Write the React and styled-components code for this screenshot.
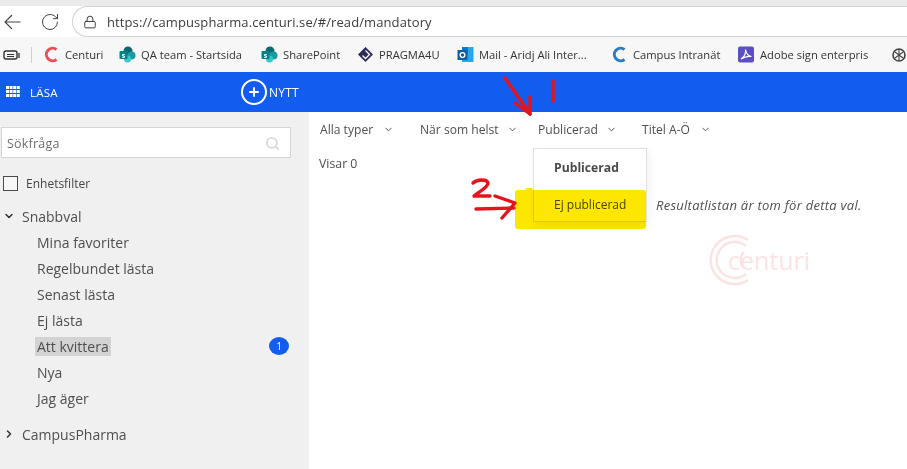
import React from 'react';
import styled, { createGlobalStyle } from 'styled-components';
import { RotateCw, Lock, Search, ChevronDown, ChevronRight, Plus } from 'lucide-react';

const GlobalStyle = createGlobalStyle`
  html, body { margin: 0; padding: 0; background: #fff; overflow: hidden; }
  * { box-sizing: border-box; }
  body { font-family: "Open Sans", "Noto Sans", sans-serif; color: #4a4a4a; }
`;

const Page = styled.div`
  position: relative;
  width: 907px;
  height: 469px;
  overflow: hidden;
  display: flex;
  flex-direction: column;
`;

const AddressBar = styled.div`
  height: 37px;
  background: #fff;
  border-top: 6px solid #ebebeb;
  display: flex;
  align-items: flex-start;
  padding-left: 4px;
`;

const NavIcon = styled.span`
  display: flex;
  align-items: center;
  justify-content: center;
  height: 31px;
  width: ${p => p.$w}px;
  color: #444;
  margin-right: ${p => p.$gap}px;
`;

const UrlPill = styled.div`
  flex: 1;
  height: 31px;
  margin-right: -30px;
  border: 1px solid #d2d2d2;
  border-right: none;
  border-radius: 16px 0 0 16px;
  display: flex;
  align-items: center;
  padding-left: 10px;
  gap: 10px;
  color: #333;
`;

const UrlText = styled.span`
  font-size: 13px;
  color: #3c3c3c;
  letter-spacing: 0.1px;
`;

const Bookmarks = styled.div`
  height: 35px;
  background: #f7f7f7;
  display: flex;
  align-items: center;
  padding-left: 3px;
  font-size: 11.2px;
  color: #333;
  white-space: nowrap;
`;

const Divider = styled.span`
  width: 1px;
  height: 16px;
  background: #cfcfcf;
  margin: 0 11px 0 11px;
`;

const Bookmark = styled.span`
  display: flex;
  align-items: center;
  gap: 5px;
  width: ${p => p.$w}px;
  flex: none;
`;

const BlueBar = styled.div`
  height: 40px;
  background: #135cf0;
  color: #fff;
  display: flex;
  align-items: center;
  font-size: 11.5px;
  letter-spacing: 0.2px;
`;

const BarSection = styled.div`
  display: flex;
  align-items: center;
  width: 241px;
  padding-left: 6px;
  gap: 10px;
`;

const NewButton = styled.div`
  display: flex;
  align-items: center;
  gap: 2px;
  font-size: 12px;
`;

const PlusRing = styled.span`
  width: 26px;
  height: 26px;
  border: 2px solid #fff;
  border-radius: 50%;
  display: flex;
  align-items: center;
  justify-content: center;
`;

const Body = styled.div`
  flex: 1;
  display: flex;
`;

const Sidebar = styled.aside`
  width: 309px;
  background: #f0f0f0;
  padding: 15px 0 0 1px;
`;

const SearchBox = styled.div`
  width: 290px;
  height: 31px;
  margin-bottom: 16px;
  border: 1px solid #d5d5d5;
  background: #fff;
  display: flex;
  align-items: center;
  justify-content: space-between;
  padding: 1px 10px 0 5px;
  font-size: 12.5px;
  color: #6e6e6e;
  letter-spacing: 0.2px;
`;

const FilterRow = styled.label`
  display: flex;
  align-items: center;
  gap: 8px;
  padding-left: 2px;
  font-size: 12px;
  color: #444;
  margin-bottom: 11px;
  height: 18px;
`;

const Check = styled.span`
  width: 15px;
  height: 15px;
  border: 1px solid #4a4a4a;
  background: #f6f6f6;
`;

const GroupHead = styled.div`
  display: flex;
  align-items: center;
  gap: 7px;
  padding-left: 2px;
  height: 26px;
  font-size: 14px;
  color: #4f4f4f;
  margin-top: ${p => p.$top || 0}px;
`;

const ItemRow = styled.div`
  height: 26px;
  display: flex;
  align-items: center;
  justify-content: space-between;
  padding-left: 34px;
  padding-right: 20px;
  font-size: 14px;
  color: #4f4f4f;
`;

const ItemLabel = styled.span`
  padding: 0 2px;
  line-height: 19px;
  background: ${p => (p.$active ? '#d3d3d3' : 'transparent')};
`;

const CountBadge = styled.span`
  width: 20px;
  height: 18px;
  border-radius: 50%;
  background: #135cf0;
  color: #fff;
  font-size: 10px;
  display: flex;
  align-items: center;
  justify-content: center;
`;

const Main = styled.main`
  position: relative;
  flex: 1;
  background: #fff;
  padding: 7px 0 0 10px;
`;

const FilterBar = styled.div`
  display: flex;
  align-items: center;
  height: 20px;
  font-size: 12.1px;
  color: #4f4f4f;
`;

const FilterButton = styled.span`
  display: flex;
  align-items: center;
  gap: ${p => p.$gap}px;
  width: ${p => p.$w}px;
  flex: none;
  padding-left: 1px;
  color: #4f4f4f;
`;

const Showing = styled.div`
  margin-top: 16px;
  font-size: 12.3px;
  color: #4f4f4f;
`;

const Menu = styled.div`
  position: absolute;
  left: 224px;
  top: 36px;
  width: 114px;
  height: 74px;
  background: #fff;
  border: 1px solid #e0e0e0;
  box-shadow: 2px 3px 8px rgba(0, 0, 0, 0.06);
  display: flex;
  flex-direction: column;
`;

const MenuItem = styled.div`
  height: ${p => (p.$bold ? 37 : 36)}px;
  padding-top: ${p => (p.$bold ? 0 : 2)}px;
  display: flex;
  align-items: center;
  padding-left: 20px;
  font-size: ${p => (p.$bold ? 12.2 : 12)}px;
  font-weight: ${p => (p.$bold ? 700 : 400)};
  color: #4a4a4a;
`;

// marker stroke painted on top of the menu, text shows through
const Highlight = styled.div`
  position: absolute;
  left: 206px;
  top: 78px;
  width: 131px;
  height: 39px;
  background: #fde600;
  border-radius: 3px;
  mix-blend-mode: multiply;

  &::before {
    content: '';
    position: absolute;
    left: 10px;
    top: -2px;
    width: 8px;
    height: 3px;
    background: #fde600;
    border-radius: 2px 2px 0 0;
  }
`;

const EmptyText = styled.div`
  position: absolute;
  left: 347px;
  top: 84px;
  font-size: 13px;
  letter-spacing: 0.26px;
  font-style: italic;
  color: #4f4f4f;
`;

const Watermark = styled.div`
  position: absolute;
  left: 399px;
  top: 122px;
  display: flex;
  align-items: center;
  color: #fbe3e3;
  font-size: 25px;
  font-weight: 500;
`;

const WatermarkText = styled.span`
  margin-left: -26px;
`;

const Annotations = styled.svg`
  position: absolute;
  left: 0;
  top: 0;
  pointer-events: none;
`;

const BackArrow = () => (
  <svg width="17" height="16" viewBox="0 0 17 16">
    <path d="M16.5 8 H1 M8 1 L1 8 L8 15" fill="none" stroke="#444" strokeWidth="1.1" />
  </svg>
);

const AppGrid = () => (
  <svg width="14" height="12" viewBox="0 0 14 12" fill="#fff">
    {[0, 4, 8].map(y =>
      [0, 3.6, 7.2, 10.8].map(x => <rect key={`${x}-${y}`} x={x} y={y} width="3" height="3" />)
    )}
  </svg>
);

const SharePointIcon = () => (
  <svg width="17" height="17" viewBox="0 0 17 17">
    <circle cx="9" cy="5" r="4.5" fill="#0b6a70" />
    <circle cx="12.5" cy="9.5" r="4" fill="#1a9ba1" />
    <circle cx="8.5" cy="13" r="3.5" fill="#37c6d0" />
    <rect x="0.5" y="5" width="8" height="8" rx="1" fill="#038387" />
    <text x="4.5" y="11.5" fontSize="7" fontWeight="700" textAnchor="middle" fill="#fff">s</text>
  </svg>
);

const CLogo = ({ color }) => (
  <svg width="17" height="17" viewBox="0 0 17 17">
    <path d="M13.5 3.5 A6.3 6.3 0 1 0 13.5 13.5" fill="none" stroke={color} strokeWidth="3" />
  </svg>
);

const PragmaIcon = () => (
  <svg width="17" height="17" viewBox="0 0 17 17">
    <path d="M8.5 1 L16 8.5 L8.5 16 L1 8.5 Z" fill="#2b2b5c" />
    <path d="M8.5 4.5 L12.5 8.5 L8.5 12.5 L5.5 9.5" fill="none" stroke="#fff" strokeWidth="1.3" />
  </svg>
);

const OutlookIcon = () => (
  <svg width="17" height="17" viewBox="0 0 17 17">
    <rect x="5" y="1" width="11.5" height="15" fill="#28a8ea" />
    <rect x="5" y="1" width="6" height="7" fill="#0078d4" />
    <rect x="0.5" y="4" width="10" height="10" fill="#0f5ea8" />
    <circle cx="5.5" cy="9" r="2.4" fill="none" stroke="#fff" strokeWidth="1.3" />
  </svg>
);

const AdobeIcon = () => (
  <svg width="17" height="17" viewBox="0 0 17 17">
    <rect width="16" height="16" y="0.5" rx="2" fill="#5a4fc4" />
    <path d="M3 13 C6 11 8 7 7.5 3.5 C8 7 10 10 13.5 10.5 C10 10 6 11 3 13 Z" fill="none" stroke="#fff" strokeWidth="1.2" />
  </svg>
);

const ChatIcon = () => (
  <svg width="16" height="16" viewBox="0 0 16 16">
    <circle cx="8" cy="8" r="6" fill="none" stroke="#444" strokeWidth="1.6" />
    <path d="M4 5 L12 11 M12 5 L4 11 M8 2 V14" stroke="#444" strokeWidth="1.1" />
  </svg>
);

const TabsIcon = () => (
  <svg width="17" height="12" viewBox="0 0 17 12">
    <rect x="1" y="2" width="13" height="8" rx="2" fill="none" stroke="#333" strokeWidth="1.4" />
    <path d="M4 5.5 H11 M4 7.5 H11" stroke="#333" strokeWidth="1" />
    <path d="M16 4 V9" stroke="#333" strokeWidth="1.3" />
  </svg>
);

const CenturiMark = () => (
  <svg width="46" height="52" viewBox="0 0 46 52">
    <g fill="none" stroke="#fbe3e3" strokeWidth="2.5">
      <path d="M40 6 A24 24 0 1 0 40 46" />
      <path d="M38 12 A18 18 0 1 0 38 40" />
      <path d="M36 18 A11 11 0 0 0 36 34" />
    </g>
  </svg>
);

const bookmarks = [
  { label: 'Centuri', w: 76, icon: <CLogo color="#e8505b" /> },
  { label: 'QA team - Startsida', w: 142, icon: <SharePointIcon /> },
  { label: 'SharePoint', w: 96, icon: <SharePointIcon /> },
  { label: 'PRAGMA4U', w: 100, icon: <PragmaIcon /> },
  { label: 'Mail - Aridj Ali Inter...', w: 154, icon: <OutlookIcon /> },
  { label: 'Campus Intranät', w: 127, icon: <CLogo color="#2b7cc0" /> },
  { label: 'Adobe sign enterpris', w: 153, icon: <AdobeIcon /> },
];

const quickLinks = ['Mina favoriter', 'Regelbundet lästa', 'Senast lästa', 'Ej lästa', 'Att kvittera', 'Nya', 'Jag äger'];

const filters = [
  { label: 'Alla typer', w: 100, gap: 10 },
  { label: 'När som helst', w: 118, gap: 8 },
  { label: 'Publicerad', w: 104, gap: 8 },
  { label: 'Titel A-Ö', w: 90, gap: 10 },
];

export default function App() {
  return (
    <Page>
      <GlobalStyle />
      <AddressBar>
        <NavIcon $w={17} $gap={18}><BackArrow /></NavIcon>
        <NavIcon $w={21} $gap={12}><RotateCw size={20} strokeWidth={1.2} /></NavIcon>
        <UrlPill>
          <Lock size={14} strokeWidth={1.6} />
          <UrlText>https://campuspharma.centuri.se/#/read/mandatory</UrlText>
        </UrlPill>
      </AddressBar>
      <Bookmarks>
        <TabsIcon />
        <Divider />
        {bookmarks.map(b => (
          <Bookmark key={b.label} $w={b.w}>{b.icon}{b.label}</Bookmark>
        ))}
        <ChatIcon />
      </Bookmarks>
      <BlueBar>
        <BarSection>
          <AppGrid />
          LÄSA
        </BarSection>
        <NewButton>
          <PlusRing><Plus size={14} strokeWidth={3.2} /></PlusRing>
          NYTT
        </NewButton>
      </BlueBar>
      <Body>
        <Sidebar>
          <SearchBox>
            Sökfråga
            <Search size={15} strokeWidth={3} color="#d8d8d8" />
          </SearchBox>
          <FilterRow><Check />Enhetsfilter</FilterRow>
          <GroupHead><ChevronDown size={12} strokeWidth={3} color="#333" />Snabbval</GroupHead>
          {quickLinks.map(item => (
            <ItemRow key={item}>
              <ItemLabel $active={item === 'Att kvittera'}>{item}</ItemLabel>
              {item === 'Att kvittera' && <CountBadge>1</CountBadge>}
            </ItemRow>
          ))}
          <GroupHead $top={10}><ChevronRight size={12} strokeWidth={3} color="#333" />CampusPharma</GroupHead>
        </Sidebar>
        <Main>
          <FilterBar>
            {filters.map(f => (
              <FilterButton key={f.label} $w={f.w} $gap={f.gap}>
                {f.label}
                <ChevronDown size={11} strokeWidth={2} />
              </FilterButton>
            ))}
          </FilterBar>
          <Showing>Visar 0</Showing>
          <Menu>
            <MenuItem $bold>Publicerad</MenuItem>
            <MenuItem>Ej publicerad</MenuItem>
          </Menu>
          <Highlight />
          <EmptyText>Resultatlistan är tom för detta val.</EmptyText>
          <Watermark>
            <CenturiMark />
            <WatermarkText>centuri</WatermarkText>
          </Watermark>
        </Main>
      </Body>
      <Annotations width="907" height="469" viewBox="0 0 907 469">
        <g fill="none" stroke="#e5141c" strokeWidth="3.4" strokeLinecap="round" strokeLinejoin="round">
          <path d="M505 78 L530 114" />
          <path d="M515 103 L530 114 L530 97" />
          <path d="M553 81 V101" />
          <path d="M473 183 C477 179 487 179 488 183 C488 188 478 192 474 196 L490 196" />
          <path d="M476 209 L514 208" />
          <path d="M495 196 L515 203 L502 218" />
        </g>
      </Annotations>
    </Page>
  );
}
